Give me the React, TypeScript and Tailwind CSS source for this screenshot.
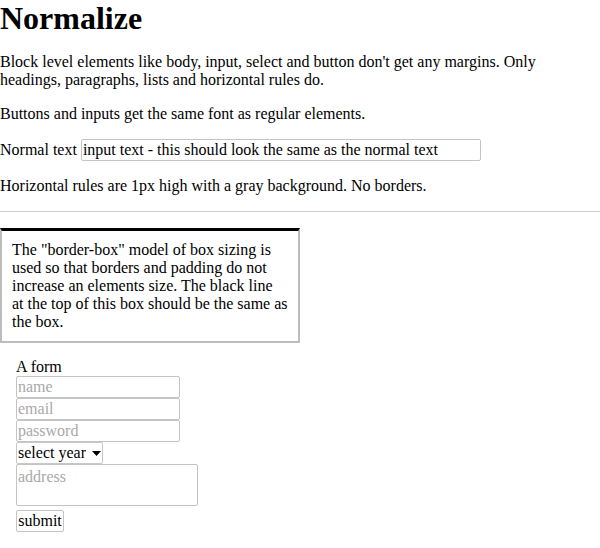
import React from "react";

export default function App() {
  return (
    <div className="w-[600px] min-h-[548px] bg-white text-black font-['Liberation_Serif','Times_New_Roman',serif] text-[16px] leading-[18px]">
      <h1 className="m-0 text-[32px] font-bold leading-[36px]">Normalize</h1>
      <p className="mt-[17px]">
        Block level elements like body, input, select and button don't get any margins. Only headings, paragraphs, lists and horizontal rules do.
      </p>
      <p className="mt-4">Buttons and inputs get the same font as regular elements.</p>
      <p className="mt-4">
        Normal text{" "}
        <input
          type="text"
          defaultValue="input text - this should look the same as the normal text"
          className="w-[400px] h-[22px] border border-[#c4c4c4] rounded-[2px] px-[1px] py-0 align-baseline text-black font-['Liberation_Serif','Times_New_Roman',serif] text-[16px] outline-none"
        />
      </p>
      <p className="mt-4">Horizontal rules are 1px high with a gray background. No borders.</p>
      <hr className="my-4 h-px border-0 bg-[#cccccc]" />
      <div className="w-[300px] border-2 border-[#bdbdbd] border-t-[3px] border-t-black px-[10px] pt-[10px] pb-[10px]">
        The "border-box" model of box sizing is used so that borders and padding do not increase an elements size. The black line at the top of this box should be the same as the box.
      </div>
      <form className="mt-[15px] pl-4" onSubmit={(e) => e.preventDefault()}>
        <div className="leading-[18px]">A form</div>
        <input
          type="text"
          placeholder="name"
          className="block w-[164px] h-[22px] border border-[#c4c4c4] rounded-[2px] px-[1px] py-0 text-[16px] font-['Liberation_Serif','Times_New_Roman',serif] placeholder:text-[#a9a9a9] outline-none"
        />
        <input
          type="email"
          placeholder="email"
          className="block w-[164px] h-[22px] border border-[#c4c4c4] rounded-[2px] px-[1px] py-0 text-[16px] font-['Liberation_Serif','Times_New_Roman',serif] placeholder:text-[#a9a9a9] outline-none"
        />
        <input
          type="password"
          placeholder="password"
          className="block w-[164px] h-[22px] border border-[#c4c4c4] rounded-[2px] px-[1px] py-0 text-[16px] font-['Liberation_Serif','Times_New_Roman',serif] placeholder:text-[#a9a9a9] outline-none"
        />
        <div className="relative w-[87px] h-[22px]">
          <select
            defaultValue=""
            className="block appearance-none w-[87px] h-[22px] border border-[#c8c8c8] rounded-[2px] bg-white pl-[1px] pr-[16px] py-0 text-[16px] text-black font-['Liberation_Serif','Times_New_Roman',serif] outline-none"
          >
            <option value="">select year</option>
            <option value="2014">2014</option>
            <option value="2015">2015</option>
          </select>
          <svg
            className="pointer-events-none absolute left-[76px] top-[9px]"
            width="9"
            height="5"
            viewBox="0 0 9 5"
          >
            <path d="M0 0 L9 0 L4.5 5 Z" fill="#000" />
          </svg>
        </div>
        <textarea
          placeholder="address"
          className="block w-[182px] h-[42px] border border-[#c4c4c4] rounded-[2px] px-[1px] pt-[3px] pb-0 text-[16px] leading-[18px] font-['Liberation_Serif','Times_New_Roman',serif] placeholder:text-[#a9a9a9] resize-none outline-none"
        />
        <button
          type="submit"
          className="block mt-1 w-[48px] h-[22px] border border-[#c4c4c4] rounded-[2px] bg-white px-[1px] py-0 text-[16px] leading-[18px] text-black font-['Liberation_Serif','Times_New_Roman',serif]"
        >
          submit
        </button>
      </form>
    </div>
  );
}
